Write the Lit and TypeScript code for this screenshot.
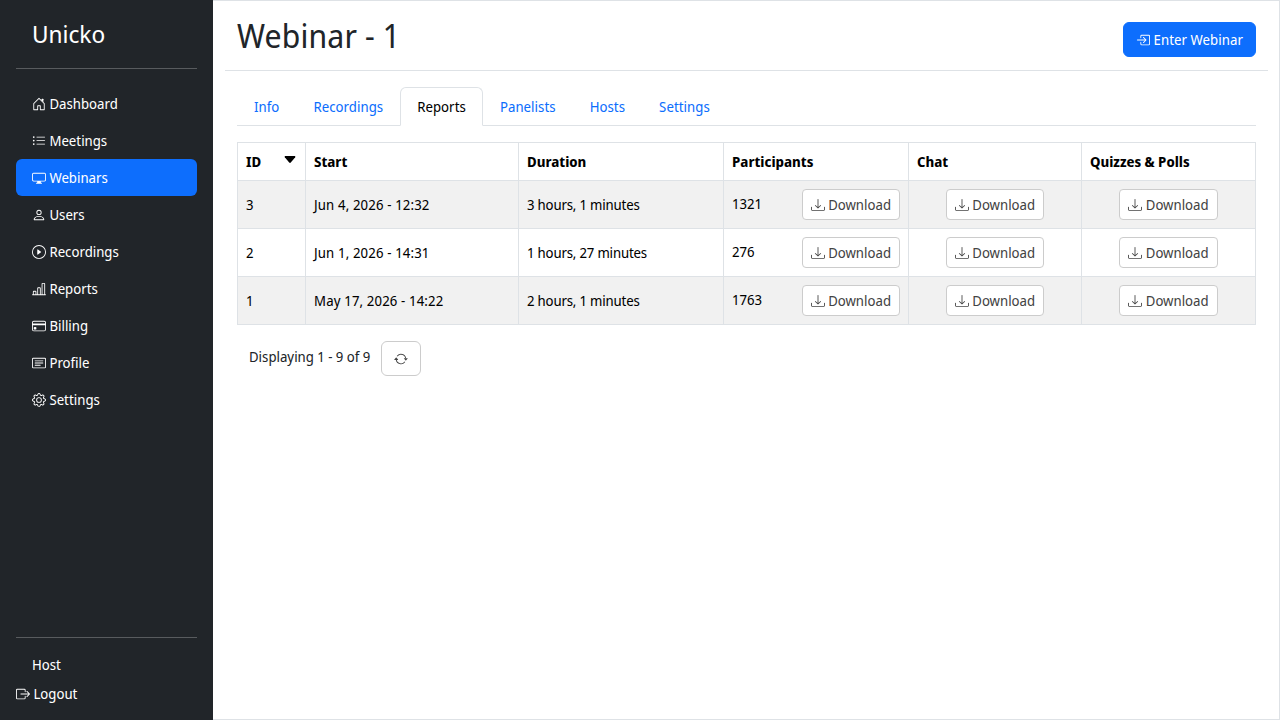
import { LitElement, html, css, svg } from "lit";
import { customElement, property } from "lit/decorators.js";
import { classMap } from "lit/directives/class-map.js";

const ICONS: Record<string, string[]> = {
  house: ["M7.646 1.146a.5.5 0 0 1 .708 0l6 6a.5.5 0 0 1 .146.354v7a.5.5 0 0 1-.5.5H9.5a.5.5 0 0 1-.5-.5v-4H7v4a.5.5 0 0 1-.5.5H2a.5.5 0 0 1-.5-.5v-7a.5.5 0 0 1 .146-.354l6-6zM2.5 7.707V14H6v-4a.5.5 0 0 1 .5-.5h3a.5.5 0 0 1 .5.5v4h3.5V7.707L8 2.207l-5.5 5.5z", "M13 2.5V6l-2-2V2.5a.5.5 0 0 1 .5-.5h1a.5.5 0 0 1 .5.5z"],
  list: ["M5 11.5a.5.5 0 0 1 .5-.5h9a.5.5 0 0 1 0 1h-9a.5.5 0 0 1-.5-.5zm0-4a.5.5 0 0 1 .5-.5h9a.5.5 0 0 1 0 1h-9a.5.5 0 0 1-.5-.5zm0-4a.5.5 0 0 1 .5-.5h9a.5.5 0 0 1 0 1h-9a.5.5 0 0 1-.5-.5zm-3 1a1 1 0 1 0 0-2 1 1 0 0 0 0 2zm0 4a1 1 0 1 0 0-2 1 1 0 0 0 0 2zm0 4a1 1 0 1 0 0-2 1 1 0 0 0 0 2z"],
  display: ["M0 4s0-2 2-2h12s2 0 2 2v6s0 2-2 2h-4c0 .667.083 1.167.25 1.5H11a.5.5 0 0 1 0 1H5a.5.5 0 0 1 0-1h.75c.167-.333.25-.833.25-1.5H2s-2 0-2-2V4zm1.398-.855a.758.758 0 0 0-.254.302A1.46 1.46 0 0 0 1 4.01V10c0 .325.078.502.145.602.07.105.17.188.302.254a1.464 1.464 0 0 0 .538.143L2.01 11H14c.325 0 .502-.078.602-.145a.758.758 0 0 0 .254-.302 1.464 1.464 0 0 0 .143-.538L15 9.99V4c0-.325-.078-.502-.145-.602a.757.757 0 0 0-.302-.254A1.46 1.46 0 0 0 13.99 3H2c-.325 0-.502.078-.602.145z"],
  person: ["M8 8a3 3 0 1 0 0-6 3 3 0 0 0 0 6zm2-3a2 2 0 1 1-4 0 2 2 0 0 1 4 0zm4 8c0 1-1 1-1 1H3s-1 0-1-1 1-4 6-4 6 3 6 4zm-1-.004c-.001-.246-.154-.986-.832-1.664C11.516 10.68 10.289 10 8 10c-2.29 0-3.516.68-4.168 1.332-.678.678-.83 1.418-.832 1.664h10z"],
  play: ["M8 15A7 7 0 1 1 8 1a7 7 0 0 1 0 14zm0 1A8 8 0 1 0 8 0a8 8 0 0 0 0 16z", "M6.271 5.055a.5.5 0 0 1 .52.038l3.5 2.5a.5.5 0 0 1 0 .814l-3.5 2.5A.5.5 0 0 1 6 10.5v-5a.5.5 0 0 1 .271-.445z"],
  chart: ["M11 2a1 1 0 0 1 1-1h2a1 1 0 0 1 1 1v12h.5a.5.5 0 0 1 0 1H.5a.5.5 0 0 1 0-1H1v-3a1 1 0 0 1 1-1h2a1 1 0 0 1 1 1v3h1V7a1 1 0 0 1 1-1h2a1 1 0 0 1 1 1v7h1V2zm1 12h2V2h-2v12zm-3 0V7H7v7h2zm-5 0v-3H2v3h2z"],
  card: ["M0 4a2 2 0 0 1 2-2h12a2 2 0 0 1 2 2v8a2 2 0 0 1-2 2H2a2 2 0 0 1-2-2V4zm2-1a1 1 0 0 0-1 1v1h14V4a1 1 0 0 0-1-1H2zm13 4H1v5a1 1 0 0 0 1 1h12a1 1 0 0 0 1-1V7z", "M2 10a1 1 0 0 1 1-1h1a1 1 0 0 1 1 1v1a1 1 0 0 1-1 1H3a1 1 0 0 1-1-1v-1z"],
  text: ["M14.5 3a.5.5 0 0 1 .5.5v9a.5.5 0 0 1-.5.5h-13a.5.5 0 0 1-.5-.5v-9a.5.5 0 0 1 .5-.5h13zm-13-1A1.5 1.5 0 0 0 0 3.5v9A1.5 1.5 0 0 0 1.5 14h13a1.5 1.5 0 0 0 1.5-1.5v-9A1.5 1.5 0 0 0 14.5 2h-13z", "M3 5.5a.5.5 0 0 1 .5-.5h9a.5.5 0 0 1 0 1h-9a.5.5 0 0 1-.5-.5zM3 8a.5.5 0 0 1 .5-.5h9a.5.5 0 0 1 0 1h-9A.5.5 0 0 1 3 8zm0 2.5a.5.5 0 0 1 .5-.5h6a.5.5 0 0 1 0 1h-6a.5.5 0 0 1-.5-.5z"],
  gear: ["M8 4.754a3.246 3.246 0 1 0 0 6.492 3.246 3.246 0 0 0 0-6.492zM5.754 8a2.246 2.246 0 1 1 4.492 0 2.246 2.246 0 0 1-4.492 0z", "M9.796 1.343c-.527-1.79-3.065-1.79-3.592 0l-.094.319a.873.873 0 0 1-1.255.52l-.292-.16c-1.64-.892-3.433.902-2.54 2.541l.159.292a.873.873 0 0 1-.52 1.255l-.319.094c-1.79.527-1.79 3.065 0 3.592l.319.094a.873.873 0 0 1 .52 1.255l-.16.292c-.892 1.64.901 3.434 2.541 2.54l.292-.159a.873.873 0 0 1 1.255.52l.094.319c.527 1.79 3.065 1.79 3.592 0l.094-.319a.873.873 0 0 1 1.255-.52l.292.16c1.64.893 3.434-.902 2.54-2.541l-.159-.292a.873.873 0 0 1 .52-1.255l.319-.094c1.79-.527 1.79-3.065 0-3.592l-.319-.094a.873.873 0 0 1-.52-1.255l.16-.292c.893-1.64-.902-3.433-2.541-2.54l-.292.159a.873.873 0 0 1-1.255-.52l-.094-.319zm-2.633.283c.246-.835 1.428-.835 1.674 0l.094.319a1.873 1.873 0 0 0 2.693 1.115l.291-.16c.764-.415 1.6.42 1.184 1.185l-.159.292a1.873 1.873 0 0 0 1.116 2.692l.318.094c.835.246.835 1.428 0 1.674l-.319.094a1.873 1.873 0 0 0-1.115 2.693l.16.291c.415.764-.42 1.6-1.185 1.184l-.291-.159a1.873 1.873 0 0 0-2.693 1.116l-.094.318c-.246.835-1.428.835-1.674 0l-.094-.319a1.873 1.873 0 0 0-2.692-1.115l-.292.16c-.764.415-1.6-.42-1.184-1.185l.159-.291A1.873 1.873 0 0 0 1.945 8.93l-.319-.094c-.835-.246-.835-1.428 0-1.674l.319-.094A1.873 1.873 0 0 0 3.06 4.377l-.16-.292c-.415-.764.42-1.6 1.185-1.184l.292.159a1.873 1.873 0 0 0 2.692-1.115l.094-.319z"],
  logout: ["M10 12.5a.5.5 0 0 1-.5.5h-8a.5.5 0 0 1-.5-.5v-9a.5.5 0 0 1 .5-.5h8a.5.5 0 0 1 .5.5v2a.5.5 0 0 0 1 0v-2A1.5 1.5 0 0 0 9.5 2h-8A1.5 1.5 0 0 0 0 3.5v9A1.5 1.5 0 0 0 1.5 14h8a1.5 1.5 0 0 0 1.5-1.5v-2a.5.5 0 0 0-1 0v2z", "M15.854 8.354a.5.5 0 0 0 0-.708l-3-3a.5.5 0 0 0-.708.708L14.293 7.5H5.5a.5.5 0 0 0 0 1h8.793l-2.147 2.146a.5.5 0 0 0 .708.708l3-3z"],
  enter: ["M6 3.5a.5.5 0 0 1 .5-.5h8a.5.5 0 0 1 .5.5v9a.5.5 0 0 1-.5.5h-8a.5.5 0 0 1-.5-.5v-2a.5.5 0 0 0-1 0v2A1.5 1.5 0 0 0 6.5 14h8a1.5 1.5 0 0 0 1.5-1.5v-9A1.5 1.5 0 0 0 14.5 2h-8A1.5 1.5 0 0 0 5 3.5v2a.5.5 0 0 0 1 0v-2z", "M11.854 8.354a.5.5 0 0 0 0-.708l-3-3a.5.5 0 1 0-.708.708L10.293 7.5H1.5a.5.5 0 0 0 0 1h8.793l-2.147 2.146a.5.5 0 0 0 .708.708l3-3z"],
  download: ["M.5 9.9a.5.5 0 0 1 .5.5v2.5a1 1 0 0 0 1 1h12a1 1 0 0 0 1-1v-2.5a.5.5 0 0 1 1 0v2.5a2 2 0 0 1-2 2H2a2 2 0 0 1-2-2v-2.5a.5.5 0 0 1 .5-.5z", "M7.646 11.854a.5.5 0 0 0 .708 0l3-3a.5.5 0 0 0-.708-.708L8.5 10.293V1.5a.5.5 0 0 0-1 0v8.793L5.354 8.146a.5.5 0 1 0-.708.708l3 3z"],
  repeat: ["M11.534 7h3.932a.25.25 0 0 1 .192.41l-1.966 2.36a.25.25 0 0 1-.384 0l-1.966-2.36a.25.25 0 0 1 .192-.41zm-11 2h3.932a.25.25 0 0 0 .192-.41L2.692 6.23a.25.25 0 0 0-.384 0L.342 8.59A.25.25 0 0 0 .534 9z", "M8 3c-1.552 0-2.94.707-3.857 1.818a.5.5 0 1 1-.771-.636A6.002 6.002 0 0 1 13.917 7H12.9A5.002 5.002 0 0 0 8 3zM3.1 9a5.002 5.002 0 0 0 8.757 2.182.5.5 0 1 1 .771.636A6.002 6.002 0 0 1 2.083 9H3.1z"],
};

@customElement("ui-icon")
class UiIcon extends LitElement {
  @property() name = "";
  static styles = css`
    :host { display: inline-block; width: 14px; height: 14px; line-height: 1; vertical-align: -2px; }
    .glyph { display: block; fill: currentColor; }
  `;
  render() {
    return html`<svg class="glyph" width="14" height="14" viewBox="0 0 16 16">
      ${(ICONS[this.name] ?? []).map((d) => svg`<path fill-rule="evenodd" d=${d}></path>`)}
    </svg>`;
  }
}

const NAV = [
  ["house", "Dashboard"],
  ["list", "Meetings"],
  ["display", "Webinars"],
  ["person", "Users"],
  ["play", "Recordings"],
  ["chart", "Reports"],
  ["card", "Billing"],
  ["text", "Profile"],
  ["gear", "Settings"],
];
const TABS = ["Info", "Recordings", "Reports", "Panelists", "Hosts", "Settings"];
const ROWS = [
  { id: 3, start: "Jun 4, 2026 - 12:32", duration: "3 hours, 1 minutes", participants: 1321 },
  { id: 2, start: "Jun 1, 2026 - 14:31", duration: "1 hours, 27 minutes", participants: 276 },
  { id: 1, start: "May 17, 2026 - 14:22", duration: "2 hours, 1 minutes", participants: 1763 },
];

@customElement("app-root")
class AppRoot extends LitElement {
  static styles = css`
    :host {
      display: flex;
      height: 720px;
      overflow: hidden;
      background: #fff;
      color: #212529;
      font: 14px/21px "Noto Sans Display", "Noto Sans", sans-serif;
    }
    * { box-sizing: border-box; }
    .sidebar { width: 213px; flex: none; display: flex; flex-direction: column; padding: 16px; background: #212529; color: #fff; }
    .brand { padding: 0 16px; font-size: 24px; line-height: 36px; }
    .rule { height: 1px; background: #585b5e; margin: 16px 0; }
    .nav { flex: 1; }
    .item { padding: 8px 16px; border-radius: 6px; height: 37px; white-space: nowrap; }
    .item.active { background: #0d6efd; }
    .host { padding: 0 16px; margin-bottom: 8px; }
    .main { flex: 1; min-width: 0; border: 1px solid #dee2e6; border-left: 0; padding: 0 11px 0 12px; }
    .header { display: flex; justify-content: space-between; align-items: flex-start; height: 70px; padding: 0 12px; border-bottom: 1px solid #dee2e6; }
    .title { margin: 16px 0 0; font-size: 32px; line-height: 38px; font-weight: 400; letter-spacing: 0.15px; }
    .btn { display: inline-block; border: 1px solid #ccc; border-radius: 6px; padding: 6px 12px; background: #fff; color: #444; white-space: nowrap; }
    .btn.primary { margin-top: 21px; background: #0d6efd; border-color: #0d6efd; color: #fff; letter-spacing: 0.05px; }
    .btn.small { padding: 4px 8px; border-radius: 4px; }
    .body { padding: 16px 12px; }
    .tabs { display: flex; border-bottom: 1px solid #dee2e6; }
    .tab { padding: 8px 16px; border: 1px solid transparent; margin-bottom: -1px; border-radius: 6px 6px 0 0; color: #0d6efd; letter-spacing: 0.04px; }
    .tab.active { color: #000; background: #fff; border-color: #dee2e6 #dee2e6 #fff; }
    .table { width: 1019px; margin-top: 16px; table-layout: fixed; border-collapse: separate; border-spacing: 0; border: solid #dee2e6; border-width: 1px 0 0 1px; color: #000; }
    .c1 { width: 68px; } .c2 { width: 213px; } .c3 { width: 205px; } .c4 { width: 185px; } .c5 { width: 173px; } .c6 { width: 174px; }
    .th, .td { padding: 8px; border: solid #dee2e6; border-width: 0 1px 1px 0; text-align: left; vertical-align: middle; }
    .th { font-weight: 700; }
    .date { letter-spacing: 0.15px; }
    .duration { letter-spacing: -0.17px; }
    .odd { background: #f1f1f1; }
    .split { display: flex; justify-content: space-between; align-items: flex-start; }
    .count { line-height: 29px; }
    .sort { margin: 5px 1px 0 0; display: block; }
    .centered { text-align: center; }
    .footer { display: flex; padding: 16px 12px; gap: 11px; }
    .summary { width: 121px; padding-top: 5px; white-space: nowrap; }
  `;

  private download() {
    return html`<span class="btn small"><ui-icon name="download"></ui-icon> Download</span>`;
  }

  render() {
    return html`
      <aside class="sidebar">
        <div class="brand">Unicko</div>
        <div class="rule"></div>
        <nav class="nav">
          ${NAV.map(([icon, label]) => html`<div class=${classMap({ item: true, active: label === "Webinars" })}><ui-icon name=${icon}></ui-icon> ${label}</div>`)}
        </nav>
        <div class="rule"></div>
        <div class="host">Host</div>
        <div class="logout"><ui-icon name="logout"></ui-icon> Logout</div>
      </aside>
      <main class="main">
        <header class="header">
          <h1 class="title">Webinar - 1</h1>
          <span class="btn primary"><ui-icon name="enter"></ui-icon> Enter Webinar</span>
        </header>
        <section class="body">
          <div class="tabs">
            ${TABS.map((t) => html`<div class=${classMap({ tab: true, active: t === "Reports" })}>${t}</div>`)}
          </div>
          <table class="table">
            <colgroup><col class="c1"><col class="c2"><col class="c3"><col class="c4"><col class="c5"><col class="c6"></colgroup>
            <thead>
              <tr>
                <th class="th"><div class="split">ID<svg class="sort" width="12" height="8" viewBox="0 0 12 8"><path d="M1.2 0h9.6q1 0.3 .4 1.3L6.8 6.6q-.8.8-1.6 0L.8 1.3Q.2.3 1.2 0z"></path></svg></div></th>
                <th class="th">Start</th>
                <th class="th">Duration</th>
                <th class="th">Participants</th>
                <th class="th">Chat</th>
                <th class="th">Quizzes &amp; Polls</th>
              </tr>
            </thead>
            <tbody>
              ${ROWS.map((r, i) => html`<tr class=${classMap({ odd: i % 2 === 0 })}>
                <td class="td">${r.id}</td>
                <td class="td date">${r.start}</td>
                <td class="td duration">${r.duration}</td>
                <td class="td"><div class="split"><span class="count">${r.participants}</span>${this.download()}</div></td>
                <td class="td centered">${this.download()}</td>
                <td class="td centered">${this.download()}</td>
              </tr>`)}
            </tbody>
          </table>
          <div class="footer">
            <span class="summary">Displaying 1 - 9 of 9</span>
            <span class="btn"><ui-icon name="repeat"></ui-icon></span>
          </div>
        </section>
      </main>
    `;
  }
}
